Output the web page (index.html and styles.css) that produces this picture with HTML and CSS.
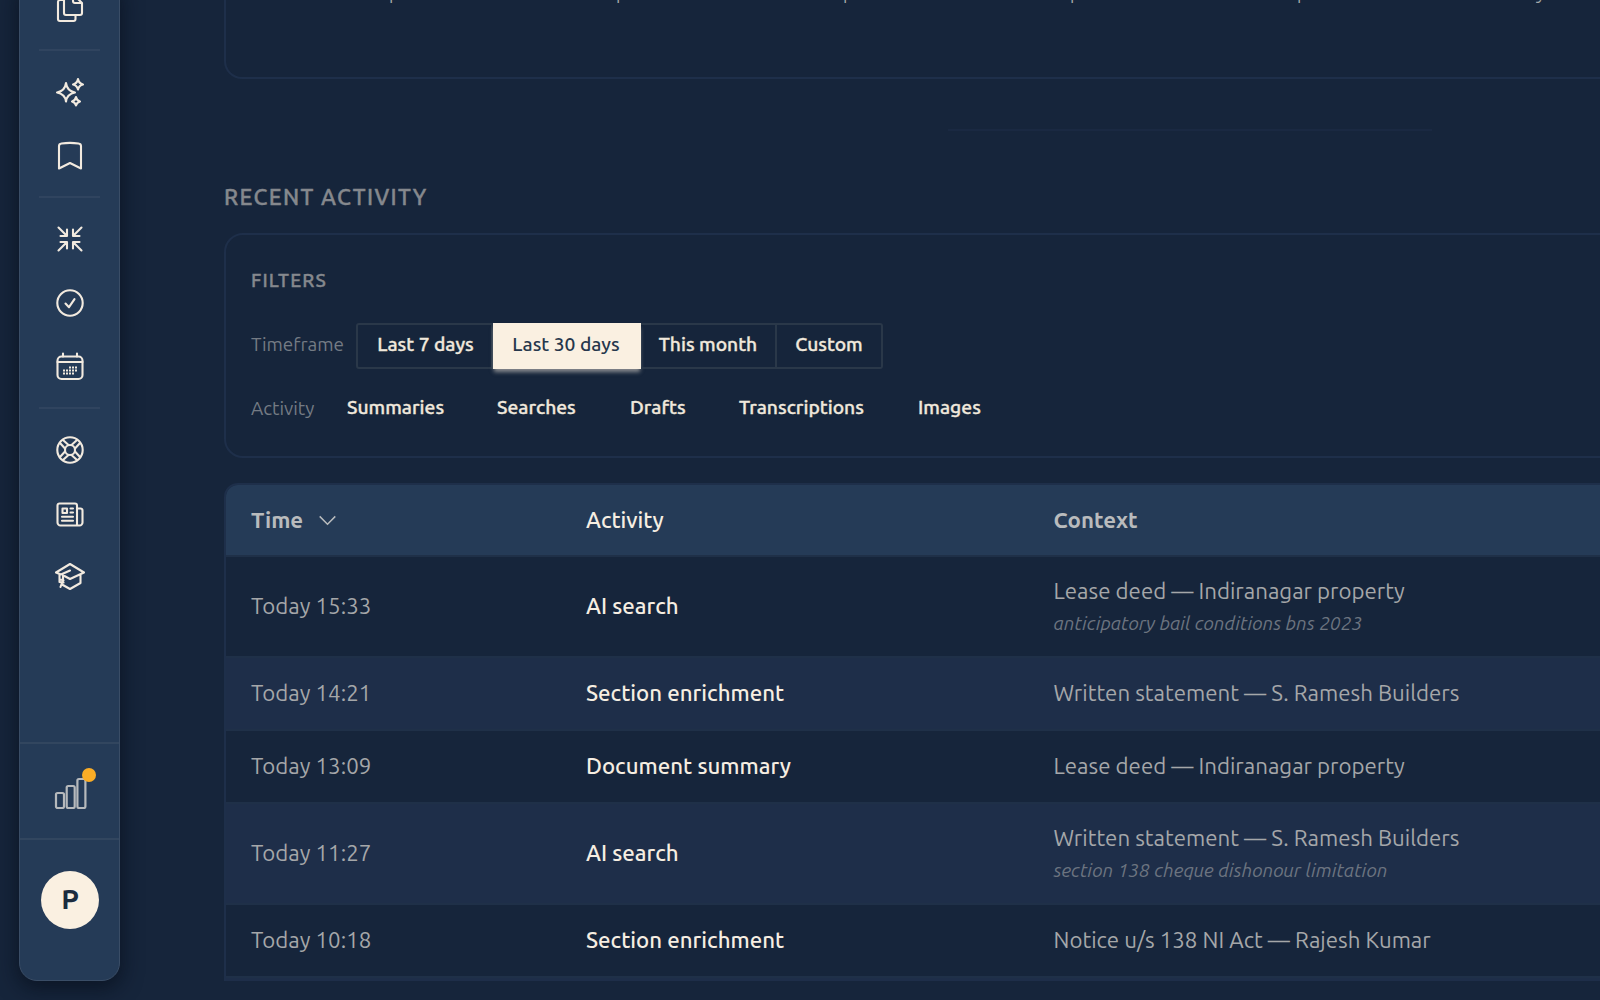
FILE: index.html
```html
<!DOCTYPE html>
<html lang="en">
<head>
    <meta charset="UTF-8">
    <meta name="viewport" content="width=device-width, initial-scale=1.0">
    <title>Recent Activity</title>
    <link rel="stylesheet" href="styles.css">
</head>
<body>
    <div class="app">
        <!-- Sidebar -->
        <nav class="sidebar">
            <div class="nav-group nav-first">
                <svg class="icon" viewBox="0 0 30 30"><path d="M8.500 7H5a2 2 0 0 0-2 2v17a2 2 0 0 0 2 2h13.500a2 2 0 0 0 2-2v-4M9 3v17a2 2 0 0 0 2 2h14a2 2 0 0 0 2-2V10l-6-6H11M18 3v5a2 2 0 0 0 2 2h7"/></svg>
            </div>
            <div class="nav-group">
                <svg class="icon" viewBox="0 0 30 30"><path d="M11 6q1 8 9 9.500q-8 1.500-9 9q-1-7.500-9-9q8-1.500 9-9.500zM23 2q.9 4.500 5 5.500q-4.100 1-5 5q-.9-4-5-5q4.100-1 5-5.500zM21 20q.7 3.500 4 4.500q-3.300 1-4 4q-.7-3-4-4q3.300-1 4-4.500z"/></svg>
                <svg class="icon" viewBox="0 0 30 30"><path d="M6.500 2.500Q15 1.300 23.500 2.500Q26 2.800 26 5v22.500l-11-5.500l-11 5.500V5q0-2.200 2.500-2.500z"/></svg>
            </div>
            <div class="nav-group">
                <svg class="icon" viewBox="0 0 30 30"><path d="M3.500 3.500l8 8M12 5.500V12H5.500M26.500 3.500l-8 8M18 5.500V12h6.500M3.500 26.500l8-8M12 24.500V18H5.500M26.500 26.500l-8-8M18 24.500V18h6.500"/></svg>
                <svg class="icon" viewBox="0 0 30 30"><circle cx="15" cy="15" r="12.700"/><path d="M10.500 15.500l3.500 3.700l5.500-8"/></svg>
                <svg class="icon" viewBox="0 0 30 30"><rect x="2.500" y="4.500" width="25" height="22.500" rx="4"/><path d="M8 1.500v3M22 1.500v3M2.500 10h25"/><path class="dots" d="M14 15.500h9M8 18.500h15M8 21.500h12"/></svg>
            </div>
            <div class="nav-group nav-last">
                <svg class="icon" viewBox="0 0 30 30"><circle cx="15" cy="15" r="12.700"/><circle cx="15" cy="15" r="5"/><path d="M10 13.500L5 8M13.500 10L8 5M16.500 10L22 5M20 13.500L25 8M20 16.500L25 22M16.500 20L22 25M13.500 20L8 25M10 16.500L5 22"/></svg>
                <svg class="icon" viewBox="0 0 30 30"><path d="M22 26.500H5.500a3 3 0 0 1-3-3v-17a2 2 0 0 1 2-2H20a2 2 0 0 1 2 2v20M22 9.500h3.500a2 2 0 0 1 2 2v12a3 3 0 0 1-3 3H22M7.500 9.500h4.500v4.500H7.500zM15.500 9.500h2.500M15.500 13.500h2.500M7 17.800h11M7 21.800h11"/></svg>
                <svg class="icon" viewBox="0 0 30 30"><path d="M1 10.500l14-8.500l14 8.500l-14 6.500l-5.500-3M1 10.500l5 2l9-4M4.500 12v8M25.500 13v8L15 27l-8-4.500M8 13.500v4.500l-2.500 7M4.500 17l4 1.500M4.500 20l4 .5"/></svg>
            </div>
            <div class="usage">
                <svg class="usage-icon" viewBox="0 0 34 34"><rect x="2" y="18" width="8" height="15" rx="1.500"/><rect x="12.700" y="11" width="8" height="22" rx="1.500"/><rect x="23.400" y="4" width="8" height="29" rx="1.500"/></svg>
                <span class="usage-dot"></span>
            </div>
            <div class="profile">
                <div class="avatar">P</div>
            </div>
        </nav>

        <!-- Main content -->
        <main class="content">
            <section class="chart-card">
                <div class="chart-labels">
                    <span>p</span><span>p</span><span>p</span><span>p</span><span>p</span><span class="last-label">y</span>
                </div>
            </section>
            <hr class="section-line">
            <h2 class="section-title">RECENT ACTIVITY</h2>

            <section class="filters">
                <h3 class="filters-title">FILTERS</h3>
                <div class="filter-row">
                    <span class="filter-label">Timeframe</span>
                    <div class="segments">
                        <button class="segment seg-7">Last 7 days</button>
                        <button class="segment seg-30 active">Last 30 days</button>
                        <button class="segment seg-month">This month</button>
                        <button class="segment seg-custom">Custom</button>
                    </div>
                </div>
                <div class="filter-row activity-row">
                    <span class="filter-label activity-label">Activity</span>
                    <button class="chip chip-summaries">Summaries</button>
                    <button class="chip chip-searches">Searches</button>
                    <button class="chip chip-drafts">Drafts</button>
                    <button class="chip chip-transcriptions">Transcriptions</button>
                    <button class="chip">Images</button>
                </div>
            </section>

            <section class="table">
                <div class="row head">
                    <div class="cell bold">Time <svg class="chevron" viewBox="0 0 20 12"><path d="M1.500 1.500L10 10l8.500-8.500"/></svg></div>
                    <div class="cell name">Activity</div>
                    <div class="cell bold">Context</div>
                </div>
                <div class="row tall">
                    <div class="cell">Today 15:33</div>
                    <div class="cell name">AI search</div>
                    <div class="cell context"><span>Lease deed — Indiranagar property</span><em>anticipatory bail conditions bns 2023</em></div>
                </div>
                <div class="row alt">
                    <div class="cell">Today 14:21</div>
                    <div class="cell name">Section enrichment</div>
                    <div class="cell">Written statement — S. Ramesh Builders</div>
                </div>
                <div class="row">
                    <div class="cell">Today 13:09</div>
                    <div class="cell name">Document summary</div>
                    <div class="cell">Lease deed — Indiranagar property</div>
                </div>
                <div class="row alt tall">
                    <div class="cell">Today 11:27</div>
                    <div class="cell name">AI search</div>
                    <div class="cell context"><span>Written statement — S. Ramesh Builders</span><em>section 138 cheque dishonour limitation</em></div>
                </div>
                <div class="row">
                    <div class="cell">Today 10:18</div>
                    <div class="cell name">Section enrichment</div>
                    <div class="cell">Notice u/s 138 NI Act — Rajesh Kumar</div>
                </div>
                <div class="row alt"></div>
            </section>
        </main>
    </div>
</body>
</html>
```
FILE: styles.css
```css
* {
    box-sizing: border-box;
}

body {
    margin: 0;
    background: #16253b;
    color: #a5a7a9;
    font-family: Ubuntu, "Noto Sans", sans-serif;
    overflow: hidden;
}

.app {
    display: flex;
    height: 1000px;
    overflow: hidden;
}

/* Sidebar */
.sidebar {
    display: flex;
    flex-direction: column;
    flex: none;
    width: 101px;
    height: 1001px;
    margin: -20px 0 0 19px;
    background: #253b57;
    border: 1px solid #3a4d66;
    border-radius: 18px;
    box-shadow: 0 6px 20px 2px rgba(5, 12, 24, 0.6);
}

.nav-group {
    display: flex;
    flex-direction: column;
    align-items: center;
    gap: 33.7px;
    width: 61px;
    margin: 0 auto;
    padding: 26px 0 25.5px;
    border-bottom: 2px solid #30445f;
}

.nav-first {
    height: 70px;
    padding: 12px 0 0;
}

.nav-last {
    border-bottom: 0;
    flex: 1;
}

.icon {
    width: 30px;
    height: 30px;
    flex: none;
    fill: none;
    stroke: #f2eadf;
    stroke-width: 2.1;
    stroke-linecap: round;
    stroke-linejoin: round;
}

.icon .dots {
    stroke-width: 2;
    stroke-dasharray: 2 1;
    stroke-linecap: butt;
}

.usage {
    position: relative;
    height: 96px;
    border-top: 2px solid #32465f;
    padding: 31px 0 0 34px;
}

.usage-icon {
    display: block;
    width: 34px;
    height: 34px;
    fill: none;
    stroke: #b6b9bc;
    stroke-width: 2.2;
}

.usage-dot {
    position: absolute;
    left: 62px;
    top: 24px;
    width: 14px;
    height: 14px;
    border-radius: 50%;
    background: #fbad26;
}

.profile {
    height: 142px;
    border-top: 2px solid #32465f;
    padding: 31px 0 0 21px;
}

.avatar {
    display: flex;
    align-items: center;
    justify-content: center;
    width: 58px;
    height: 58px;
    padding-bottom: 3px;
    border-radius: 50%;
    background: #faf0e1;
    color: #1b2b3e;
    font-size: 28px;
    font-weight: bold;
}

/* Main content */
.content {
    flex: 1;
    height: 981px;
    margin-left: 104px;
    overflow: hidden;
}

.chart-card {
    display: flow-root;
    width: 1500px;
    height: 79px;
    border: 2px solid #1e2f4a;
    border-top: 0;
    border-radius: 0 0 18px 18px;
}

.chart-labels {
    display: flex;
    margin-top: -19px;
    padding-left: 163px;
    font-size: 18px;
    line-height: 24px;
}

.chart-labels span {
    flex: none;
    width: 227px;
}

.chart-labels .last-label {
    margin-left: 12px;
}

.section-line {
    width: 484px;
    height: 2px;
    margin: 50px 0 0 724px;
    border: 0;
    background: #1a2942;
}

.section-title {
    margin: 50px 0 0;
    color: #85888d;
    font-size: 22.25px;
    font-weight: 500;
    line-height: 32px;
    letter-spacing: 1.35px;
    -webkit-text-stroke: 0.4px;
}

/* Filters */
.filters {
    width: 1500px;
    height: 225px;
    margin-top: 20px;
    padding: 32px 25px;
    border: 2px solid #1e2f4a;
    border-radius: 19px;
}

.filters-title {
    margin: 0;
    color: #85888d;
    font-size: 19px;
    font-weight: 500;
    line-height: 26px;
    letter-spacing: 1.1px;
    -webkit-text-stroke: 0.4px;
}

.filter-row {
    display: flex;
    align-items: center;
    height: 46px;
    margin-top: 30px;
}

.filter-label {
    width: 105px;
    padding-bottom: 4px;
    color: #747b84;
    font-size: 18.9px;
}

.segments {
    display: flex;
}

.segment {
    height: 46px;
    padding: 0 0 5px;
    border: 2px solid #2a3849;
    border-left-width: 0;
    background: none;
    color: #f0e8dc;
    font-family: inherit;
    font-size: 19.25px;
    font-weight: 500;
    white-space: nowrap;
    -webkit-text-stroke: 0.35px;
}

.seg-7 {
    width: 137px;
    padding-left: 2px;
    border-left-width: 2px;
    border-radius: 3px 0 0 3px;
}

.seg-30 {
    width: 148px;
}

.seg-month {
    width: 136px;
}

.seg-custom {
    width: 106px;
    border-radius: 0 3px 3px 0;
}

.segment.active {
    background: #faf0e1;
    border-color: #faf0e1;
    color: #26374c;
    box-shadow: 0 4px 4px -1px rgba(250, 240, 225, 0.5);
    -webkit-text-stroke: 0;
}

.activity-row {
    margin-top: 17px;
}

.activity-label {
    width: 96px;
    padding-bottom: 3px;
}

.chip {
    padding: 0 0 4px;
    border: 0;
    background: none;
    color: #f0e8dc;
    font-family: inherit;
    font-size: 19.3px;
    font-weight: 500;
    text-align: left;
    -webkit-text-stroke: 0.35px;
}

.chip-summaries {
    width: 150px;
}

.chip-searches {
    width: 133px;
}

.chip-drafts {
    width: 109px;
}

.chip-transcriptions {
    width: 179px;
}

/* Activity table */
.table {
    width: 1500px;
    margin-top: 25px;
    border: 2px solid #1e2f4a;
    border-radius: 14px 14px 0 0;
    overflow: hidden;
}

.row {
    display: grid;
    grid-template-columns: 335px 467.5px 1fr;
    align-items: center;
    height: 73px;
    padding-left: 25px;
    border-bottom: 2px solid #1f3048;
}

.row.head {
    height: 72px;
    background: #253b57;
}

.row.tall {
    height: 101px;
}

.row.alt {
    background: #1e2e49;
}

.cell {
    padding-bottom: 2px;
    color: #a5a7a9;
    font-size: 22.25px;
    white-space: nowrap;
}

.cell.name {
    color: #f6eee2;
    font-weight: 500;
}

.cell.bold {
    color: #b9bbbd;
    font-weight: 600;
}

.head .cell {
    padding-bottom: 1px;
}

.cell.context {
    display: flex;
    flex-direction: column;
    padding-bottom: 0;
}

.context span {
    line-height: 32px;
}

.context em {
    color: #6c7480;
    font-size: 19.1px;
    line-height: 32px;
}

.chevron {
    width: 19px;
    height: 11px;
    margin-left: 10px;
    vertical-align: 2px;
    fill: none;
    stroke: #b9bbbd;
    stroke-width: 1.6;
}
```
